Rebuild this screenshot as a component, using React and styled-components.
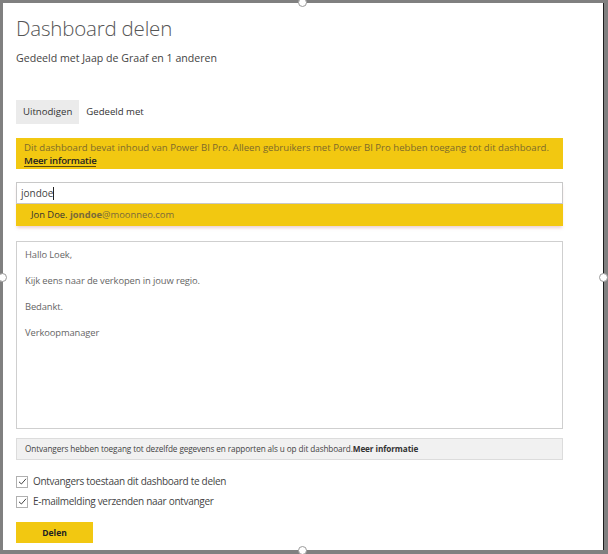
import styled, { createGlobalStyle } from "styled-components";

const GlobalStyle = createGlobalStyle`
	html, body {
		margin: 0;
		padding: 0;
		background: #808080;
	}
	body {
		font-family: "Open Sans", "Noto Sans", sans-serif;
	}
`;

const Frame = styled.div`
	position: relative;
	width: 608px;
	height: 554px;
	box-sizing: border-box;
	padding: 3px 4px 4px 3px;
`;

const Panel = styled.div`
	position: relative;
	height: 100%;
	box-sizing: border-box;
	background: #fff;
	border-right: 1px solid #1e1e1e;
	padding: 12px 40px 0 13px;
	display: flex;
	flex-direction: column;
`;

const Handle = styled.span`
	position: absolute;
	width: 9px;
	height: 9px;
	border-radius: 50%;
	background: #fff;
	border: 1px solid #9a9a9a;
	box-sizing: border-box;
	${(p) => p.$pos};
`;

const Title = styled.h1`
	margin: 0;
	font-family: "Open Sans", sans-serif;
	font-weight: 300;
	font-size: 20.5px;
	line-height: 26px;
	color: #555;
	letter-spacing: -0.2px;
`;

const Subtitle = styled.p`
	margin: 10px 0 0;
	font-size: 10.6px;
	color: #444;
`;

const Tabs = styled.div`
	display: flex;
	margin-top: 35px;
`;

const Tab = styled.div`
	padding: 0 7px;
	height: 24px;
	line-height: 24px;
	font-size: 9.6px;
	color: #333;
	background: ${(p) => (p.$active ? "#ebebeb" : "transparent")};
`;

const Banner = styled.div`
	margin-top: 14px;
	background: #f2c811;
	padding: 3px 8px 2px;
	font-size: 9.6px;
	line-height: 13px;
	color: #7d6a2c;
	white-space: nowrap;
`;

const BannerLink = styled.a`
	display: inline-block;
	color: #222;
	font-weight: 600;
	text-decoration: none;
	border-bottom: 1.5px solid #5a4a10;
	line-height: 11px;
	letter-spacing: -0.2px;
`;

const Picker = styled.div`
	margin-top: 13px;
	display: flex;
	flex-direction: column;
	box-shadow: 0 3px 3px -1px rgba(200, 120, 130, 0.35);
`;

const Input = styled.div`
	height: 22px;
	box-sizing: border-box;
	border: 1px solid #c8c8c8;
	padding: 0 4px;
	font-size: 10px;
	line-height: 20px;
	color: #444;
	display: flex;
	align-items: center;
`;

const Caret = styled.span`
	width: 1px;
	height: 13px;
	background: #222;
`;

const Suggestion = styled.div`
	height: 22px;
	background: #f2c811;
	padding-left: 15px;
	font-size: 9.4px;
	line-height: 22px;
	color: #333;
`;

const Mail = styled.span`
	color: #7a6a3a;
	font-weight: ${(p) => (p.$bold ? 700 : 400)};
`;

const Message = styled.div`
	margin-top: 15px;
	height: 188px;
	box-sizing: border-box;
	border: 1px solid #cfcfcf;
	padding: 6px 8px;
	font-size: 9.4px;
	letter-spacing: -0.1px;
	color: #666;
	display: flex;
	flex-direction: column;
	gap: 13px;
`;

const Line = styled.div`
	line-height: 13px;
`;

const Info = styled.div`
	margin-top: 9px;
	height: 22px;
	box-sizing: border-box;
	background: #f1f1f1;
	border: 1px solid #dcdcdc;
	padding: 0 8px;
	font-size: 8.2px;
	letter-spacing: -0.1px;
	line-height: 20px;
	color: #444;
`;

const Bold = styled.b`
	font-weight: 700;
	color: #333;
`;

const Checks = styled.div`
	margin-top: 15px;
	display: flex;
	flex-direction: column;
	gap: 7px;
`;

const CheckRow = styled.label`
	display: flex;
	align-items: center;
	gap: 5px;
	font-size: 10px;
	letter-spacing: -0.3px;
	line-height: 13px;
	color: #444;
`;

const Box = styled.span`
	width: 12px;
	height: 12px;
	box-sizing: border-box;
	border: 1px solid #b0b0b0;
	display: flex;
	align-items: center;
	justify-content: center;
`;

const Button = styled.button`
	margin-top: 14px;
	width: 77px;
	height: 21px;
	border: none;
	background: #f2c811;
	font-family: "Open Sans", sans-serif;
	font-weight: 700;
	font-size: 8.5px;
	color: #222;
	padding: 0;
`;

const Check = () => (
	<Box>
		<svg width="9" height="9" viewBox="0 0 9 9">
			<path d="M1 4.8 L3.4 7 L8 1.8" fill="none" stroke="#444" strokeWidth="1" />
		</svg>
	</Box>
);

export default function App() {
	return (
		<>
			<GlobalStyle />
			<Frame>
				<Panel>
					<Title>Dashboard delen</Title>
					<Subtitle>Gedeeld met Jaap de Graaf en 1 anderen</Subtitle>
					<Tabs>
						<Tab $active>Uitnodigen</Tab>
						<Tab>Gedeeld met</Tab>
					</Tabs>
					<Banner>
						Dit dashboard bevat inhoud van Power BI Pro. Alleen gebruikers met Power BI Pro hebben toegang tot dit dashboard.
						<br />
						<BannerLink>Meer informatie</BannerLink>
					</Banner>
					<Picker>
						<Input>
							jondoe
							<Caret />
						</Input>
						<Suggestion>
							Jon Doe. <Mail $bold>jondoe</Mail>
							<Mail>@moonneo.com</Mail>
						</Suggestion>
					</Picker>
					<Message>
						<Line>Hallo Loek,</Line>
						<Line>Kijk eens naar de verkopen in jouw regio.</Line>
						<Line>Bedankt.</Line>
						<Line>Verkoopmanager</Line>
					</Message>
					<Info>
						Ontvangers hebben toegang tot dezelfde gegevens en rapporten als u op dit dashboard.
						<Bold>Meer informatie</Bold>
					</Info>
					<Checks>
						<CheckRow>
							<Check />
							Ontvangers toestaan dit dashboard te delen
						</CheckRow>
						<CheckRow>
							<Check />
							E-mailmelding verzenden naar ontvanger
						</CheckRow>
					</Checks>
					<div>
						<Button>Delen</Button>
					</div>
				</Panel>
				<Handle $pos="top: -2px; left: 298px;" />
				<Handle $pos="bottom: -1px; left: 298px;" />
				<Handle $pos="top: 273px; left: -2px;" />
				<Handle $pos="top: 273px; right: 0px;" />
			</Frame>
		</>
	);
}
